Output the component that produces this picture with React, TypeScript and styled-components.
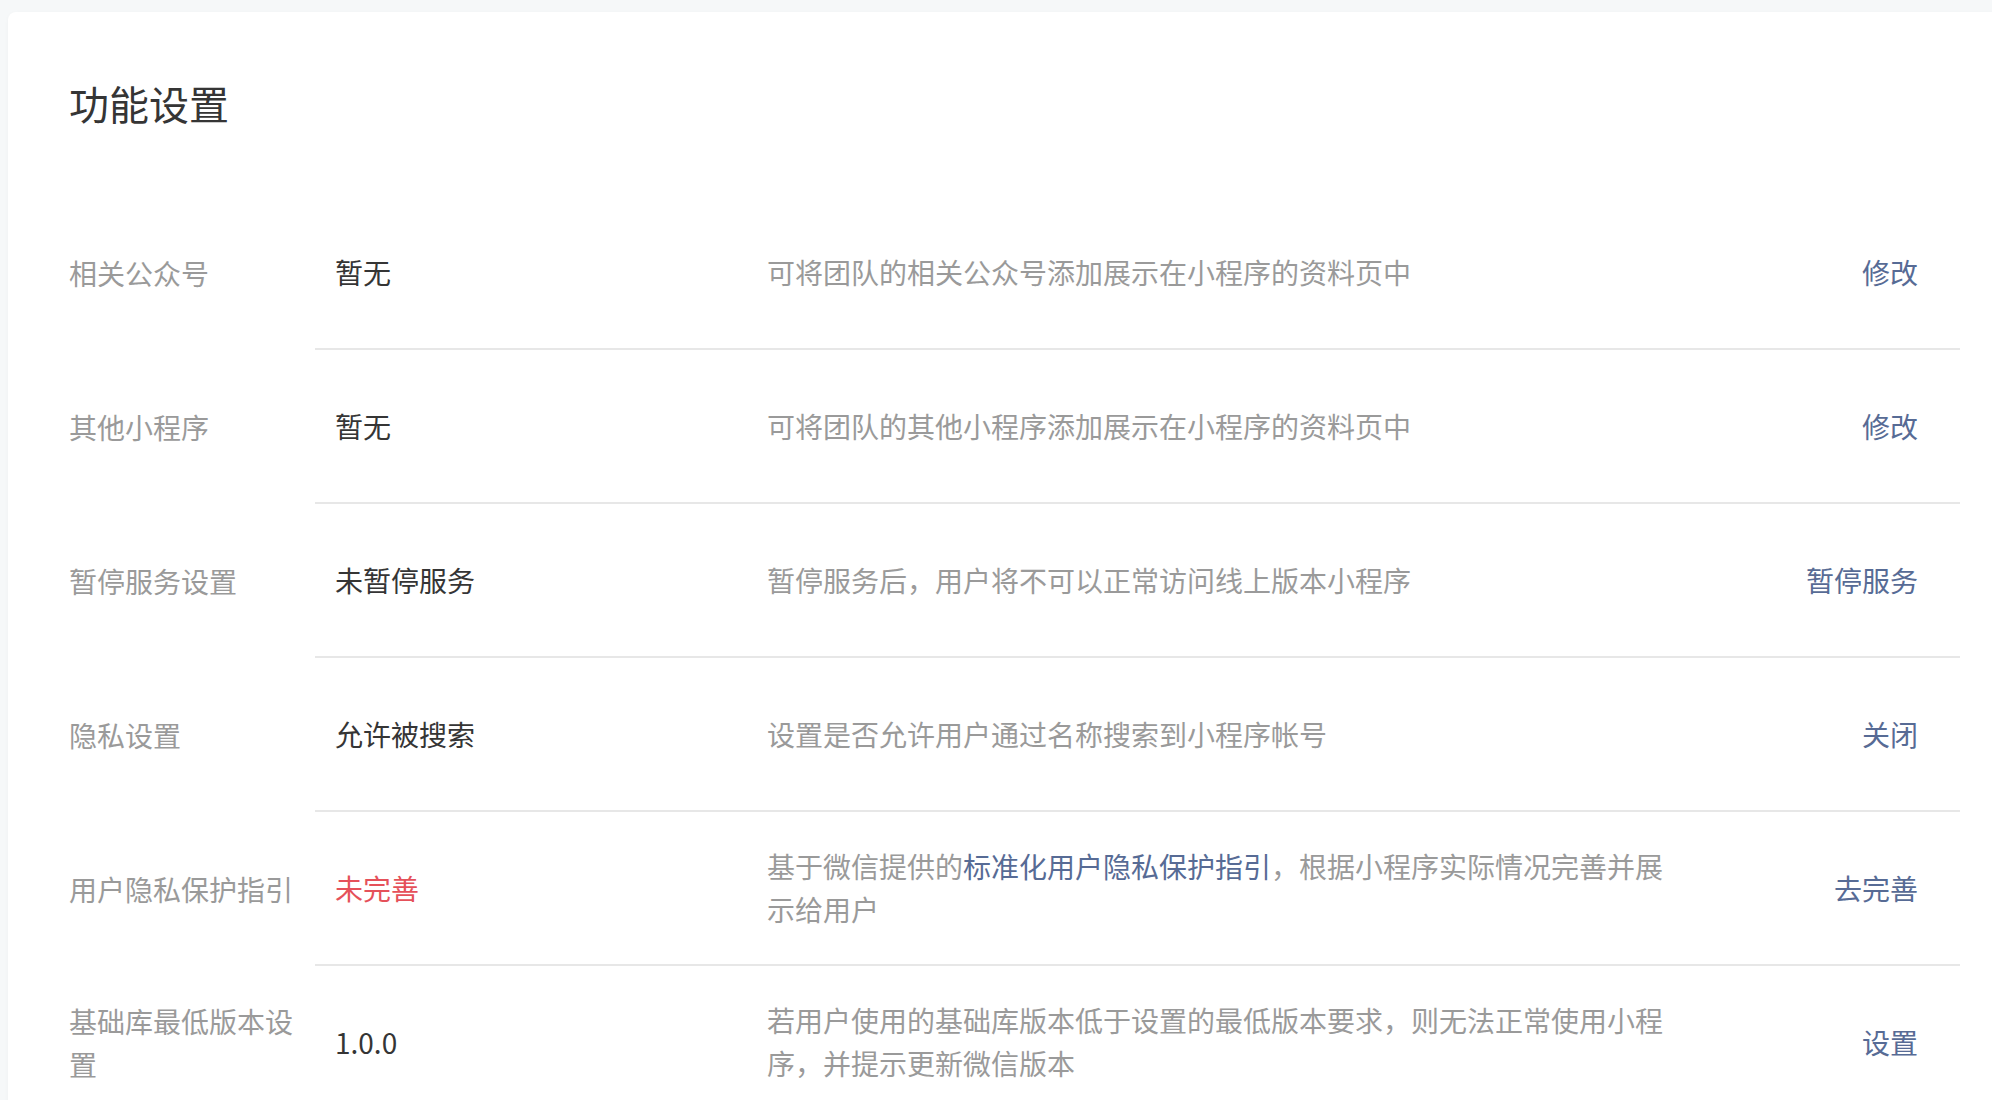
import styled, { createGlobalStyle } from "styled-components";

type Segment = { text: string; link?: boolean };

type Setting = {
  label: string;
  value: string;
  warn?: boolean;
  desc: Segment[];
  action: string;
};

const settings: Setting[] = [
  {
    label: "相关公众号",
    value: "暂无",
    desc: [{ text: "可将团队的相关公众号添加展示在小程序的资料页中" }],
    action: "修改",
  },
  {
    label: "其他小程序",
    value: "暂无",
    desc: [{ text: "可将团队的其他小程序添加展示在小程序的资料页中" }],
    action: "修改",
  },
  {
    label: "暂停服务设置",
    value: "未暂停服务",
    desc: [{ text: "暂停服务后，用户将不可以正常访问线上版本小程序" }],
    action: "暂停服务",
  },
  {
    label: "隐私设置",
    value: "允许被搜索",
    desc: [{ text: "设置是否允许用户通过名称搜索到小程序帐号" }],
    action: "关闭",
  },
  {
    label: "用户隐私保护指引",
    value: "未完善",
    warn: true,
    desc: [
      { text: "基于微信提供的" },
      { text: "标准化用户隐私保护指引", link: true },
      { text: "，根据小程序实际情况完善并展示给用户" },
    ],
    action: "去完善",
  },
  {
    label: "基础库最低版本设置",
    value: "1.0.0",
    desc: [
      {
        text: "若用户使用的基础库版本低于设置的最低版本要求，则无法正常使用小程序，并提示更新微信版本",
      },
    ],
    action: "设置",
  },
];

export default function App() {
  return (
    <>
      <GlobalStyle />
      <Page lang="zh-CN">
        <Card>
          <Title>功能设置</Title>
          <List>
            {settings.map((s) => (
              <Row key={s.label}>
                <Label>{s.label}</Label>
                <Content>
                  <Value $warn={s.warn}>{s.value}</Value>
                  <Desc>
                    {s.desc.map((seg, i) =>
                      seg.link ? (
                        <InlineLink key={i}>{seg.text}</InlineLink>
                      ) : (
                        <span key={i}>{seg.text}</span>
                      )
                    )}
                  </Desc>
                  <Action>
                    <ActionLink>{s.action}</ActionLink>
                  </Action>
                </Content>
              </Row>
            ))}
          </List>
        </Card>
      </Page>
    </>
  );
}

const GlobalStyle = createGlobalStyle`
  html, body {
    margin: 0;
    padding: 0;
    overflow: hidden;
    background: #f6f8f9;
    font-family: "Noto Sans CJK SC", "Noto Sans", sans-serif;
  }
`;

const Page = styled.div`
  padding: 12px 0 0 8px;
  min-height: 1100px;
  box-sizing: border-box;
`;

const Card = styled.div`
  width: 2012px;
  min-height: 1200px;
  box-sizing: border-box;
  background: #fff;
  border-radius: 8px;
  box-shadow: 0 1px 4px rgba(0, 0, 0, 0.03);
  padding: 63px 60px 0 61px;
`;

const Title = styled.h2`
  margin: 0 0 65px;
  font-size: 40px;
  line-height: 56px;
  font-weight: 400;
  color: #353535;
`;

const List = styled.div`
  display: flex;
  flex-direction: column;
`;

const Row = styled.div`
  display: flex;
  font-size: 28px;
  line-height: 43px;
`;

const Label = styled.div`
  width: 246px;
  flex-shrink: 0;
  display: flex;
  align-items: center;
  color: #9a9a9a;
`;

const Content = styled.div`
  flex: 1;
  display: flex;
  align-items: center;
  min-height: 154px;
  box-sizing: border-box;
  border-bottom: 2px solid #e7e7e7;
`;

const Value = styled.div<{ $warn?: boolean }>`
  width: 452px;
  flex-shrink: 0;
  box-sizing: border-box;
  padding-left: 20px;
  color: ${(p) => (p.$warn ? "#e5515a" : "#353535")};
`;

const Desc = styled.div`
  width: 902px;
  flex-shrink: 0;
  color: #9a9a9a;
  word-break: break-all;
`;

const InlineLink = styled.span`
  color: #576b95;
`;

const Action = styled.div`
  flex: 1;
  text-align: right;
  padding-right: 42px;
`;

const ActionLink = styled.a`
  color: #576b95;
  cursor: pointer;
`;
